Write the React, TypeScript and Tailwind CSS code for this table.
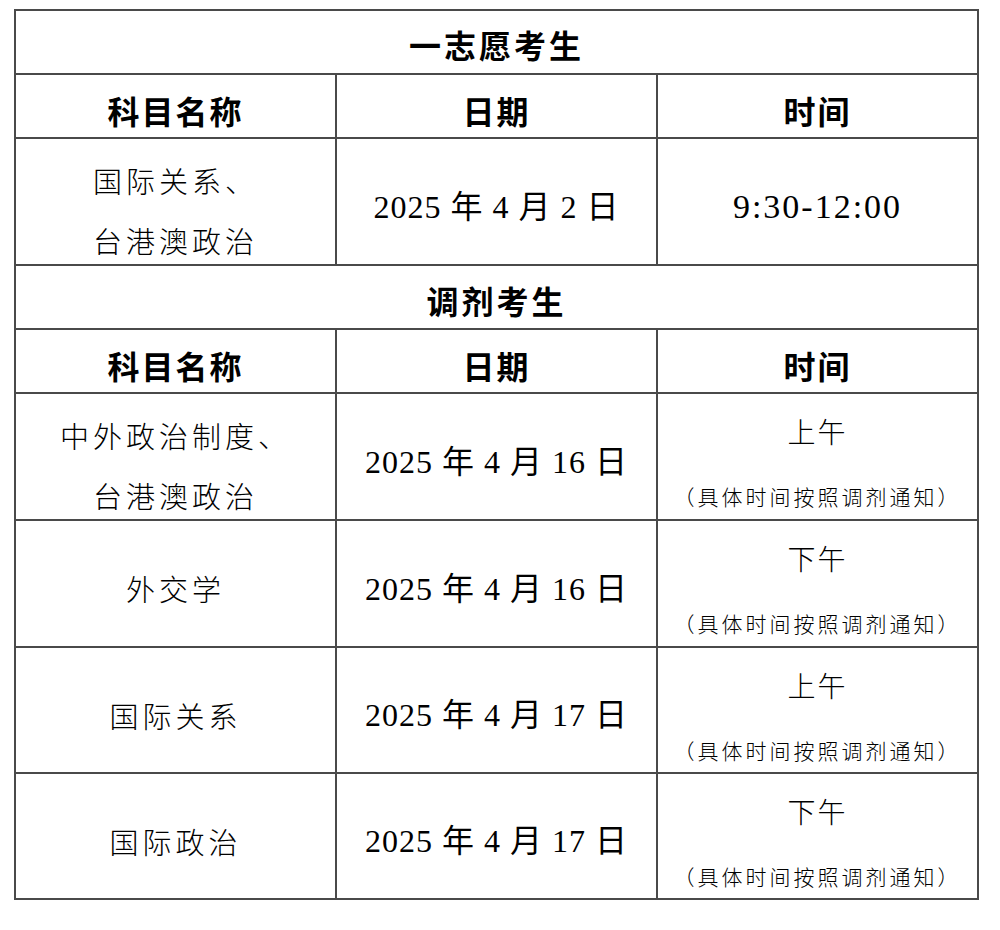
type Row =
  | { kind: 'title'; text: string; h: string }
  | { kind: 'head'; h: string }
  | { kind: 'data'; h: string; subject: string[]; date: string; time?: string; period?: string };

const rows: Row[] = [
  { kind: 'title', text: '一志愿考生', h: 'h-[64px]' },
  { kind: 'head', h: 'h-[64px]' },
  { kind: 'data', h: 'h-[127px]', subject: ['国际关系、', '台港澳政治'], date: '2025 年 4 月 2 日', time: '9:30-12:00' },
  { kind: 'title', text: '调剂考生', h: 'h-[64px]' },
  { kind: 'head', h: 'h-[64px]' },
  { kind: 'data', h: 'h-[127px]', subject: ['中外政治制度、', '台港澳政治'], date: '2025 年 4 月 16 日', period: '上午' },
  { kind: 'data', h: 'h-[127px]', subject: ['外交学'], date: '2025 年 4 月 16 日', period: '下午' },
  { kind: 'data', h: 'h-[126px]', subject: ['国际关系'], date: '2025 年 4 月 17 日', period: '上午' },
  { kind: 'data', h: 'h-[126px]', subject: ['国际政治'], date: '2025 年 4 月 17 日', period: '下午' },
];

const cell = 'w-[321px] shrink-0 border-r-2 border-[#4a4a4a] flex flex-col items-center justify-center';

// latin digits in a serif face, CJK falls through to Noto
const serif = "font-['Liberation_Serif','Times_New_Roman','DejaVu_Serif','Noto_Sans_CJK_SC',serif]";

export default function App() {
  return (
    <div className="min-h-[930px] bg-white text-black pt-[9px] pl-[14px] font-['Noto_Sans_CJK_SC',sans-serif]">
      <div className="w-[965px] border-l-2 border-t-2 border-[#4a4a4a]">
        {rows.map((row, i) => {
          if (row.kind === 'title') {
            return (
              <div key={i} className={`${row.h} flex items-center justify-center border-b-2 border-r-2 border-[#4a4a4a] ${i === 0 ? 'pt-[3px]' : 'pt-[6px]'} text-[32px] font-bold tracking-[3px]`}>
                {row.text}
              </div>
            );
          }
          if (row.kind === 'head') {
            return (
              <div key={i} className={`${row.h} flex border-b-2 border-[#4a4a4a] text-[32px] font-bold tracking-[2px]`}>
                <div className={`${cell} pt-[8px]`}>科目名称</div>
                <div className={`${cell} pt-[8px]`}>日期</div>
                <div className={`${cell} pt-[8px]`}>时间</div>
              </div>
            );
          }
          const twoLine = row.subject.length > 1;
          return (
            <div key={i} className={`${row.h} flex border-b-2 border-[#4a4a4a] font-light`}>
              <div className={`${cell} ${twoLine ? 'pt-[16px]' : 'pt-[9px]'}`}>
                {row.subject.map((s) => (
                  <div key={s} className="text-[29px] tracking-[4px] leading-[60px]">{s}</div>
                ))}
              </div>
              <div className={`${cell} pt-[10px]`}>
                <div className={`text-[32px] tracking-[1px] font-normal ${serif}`}>{row.date}</div>
              </div>
              {row.time ? (
                <div className={`${cell} pt-[10px]`}>
                  <div className={`text-[34px] tracking-[2px] font-normal ${serif}`}>{row.time}</div>
                </div>
              ) : (
                <div className={`${cell} justify-start pt-[17px]`}>
                  <div className="text-[28px] tracking-[2px] leading-[40px]">{row.period}</div>
                  <div className="mt-[30px] text-[21px] tracking-[3px] leading-[30px]">（具体时间按照调剂通知）</div>
                </div>
              )}
            </div>
          );
        })}
      </div>
    </div>
  );
}
